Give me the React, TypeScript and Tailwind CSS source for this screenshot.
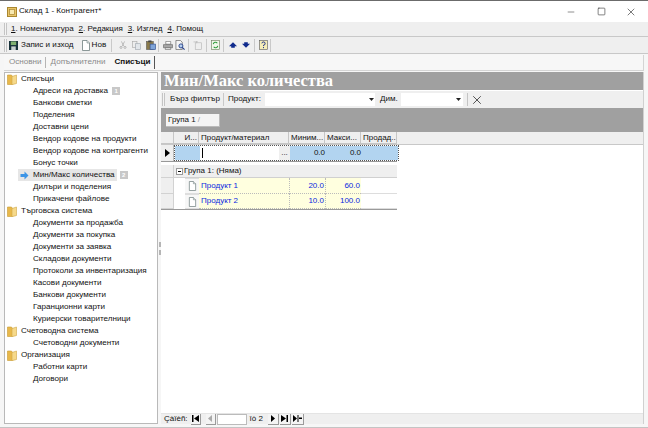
import { ReactNode } from "react";
import { Minus, Square, X } from "lucide-react";

const font = { fontFamily: '"Liberation Sans", Tahoma, sans-serif' };

const treeGroups = [
  {
    title: "Списъци",
    items: [
      "Адреси на доставка",
      "Банкови сметки",
      "Поделения",
      "Доставни цени",
      "Вендор кодове на продукти",
      "Вендор кодове на контрагенти",
      "Бонус точки",
      "Мин/Макс количества",
      "Дилъри и поделения",
      "Прикачени файлове",
    ],
  },
  {
    title: "Търговска система",
    items: [
      "Документи за продажба",
      "Документи за покупка",
      "Документи за заявка",
      "Складови документи",
      "Протоколи за инвентаризация",
      "Касови документи",
      "Банкови документи",
      "Гаранционни карти",
      "Куриерски товарителници",
    ],
  },
  { title: "Счетоводна система", items: ["Счетоводни документи"] },
  { title: "Организация", items: ["Работни карти", "Договори"] },
];

function Grip() {
  return <div className="w-[3px] h-full border-x border-[#c4c4c4] bg-[#f4f4f4] shrink-0" />;
}

function Sep() {
  return <div className="w-px h-[13px] bg-[#c9c9c9] shrink-0" />;
}

function Folder() {
  return (
    <svg width="10" height="11" viewBox="0 0 10 11" className="shrink-0">
      <path d="M0.500 1h4l1 1.500v8h-5z" fill="#e8b84a" stroke="#c79a33" strokeWidth="0.600" />
      <path d="M5 2.500l4.500-1.500v8.500l-4.500 1.200z" fill="#f6d98a" stroke="#d0a848" strokeWidth="0.600" />
    </svg>
  );
}

function DocIcon({ size = 10 }: { size?: number }) {
  return (
    <svg width={size} height={size + 1} viewBox="0 0 10 11" className="shrink-0">
      <path d="M1.500 0.500h4.500l2.500 2.500v7.500h-7z" fill="#fff" stroke="#6f7f7f" strokeWidth="0.800" />
      <path d="M6 0.500v2.500h2.500" fill="#e4e8e8" stroke="#6f7f7f" strokeWidth="0.600" />
    </svg>
  );
}

function TreeBadge({ n }: { n: number }) {
  return (
    <span className="w-[8px] h-[8px] bg-[#c8c8c8] text-white text-[6px] leading-[8px] text-center font-bold">{n}</span>
  );
}

function Tree() {
  return (
    <div className="w-[154px] shrink-0 bg-white border border-[#b9b9b9] overflow-hidden">
      {treeGroups.map((g) => (
        <div key={g.title}>
          <div className="h-[12px] flex items-center gap-[4px] pl-[2px] text-[8.100px] text-[#111]">
            <Folder />
            <span>{g.title}</span>
          </div>
          {g.items.map((item) => {
            const active = item === "Мин/Макс количества";
            return (
              <div key={item} className="h-[12px] flex items-center text-[8.100px] text-[#111] relative pl-[28px] whitespace-nowrap">
                {active && (
                  <div className="absolute left-[13px] top-0 w-[99px] h-[12px] bg-[#e6e6e6]" />
                )}
                {active && (
                  <svg width="9" height="9" viewBox="0 0 9 9" className="absolute left-[15px] top-[2px]">
                    <path d="M0.500 3h4V0.500L8.500 4.500 4.500 8.500V6h-4z" fill="#3d95e6" />
                  </svg>
                )}
                <span className="relative">{item}</span>
                {item === "Адреси на доставка" && <span className="ml-[4px] flex"><TreeBadge n={1} /></span>}
                {active && <span className="ml-[5px] relative flex"><TreeBadge n={2} /></span>}
              </div>
            );
          })}
        </div>
      ))}
    </div>
  );
}

function ToolIcons() {
  return (
    <>
      <svg width="8" height="10" viewBox="0 0 10 10" className="ml-[7px] shrink-0" aria-label="scissors">
        <path d="M3 0.500l3 6M7 0.500l-3 6" stroke="#a9a9a9" strokeWidth="0.900" fill="none" />
        <circle cx="2.500" cy="8" r="1.300" fill="none" stroke="#a9a9a9" />
        <circle cx="7.500" cy="8" r="1.300" fill="none" stroke="#a9a9a9" />
      </svg>
      <svg width="9" height="9" viewBox="0 0 10 10" className="ml-[5px] shrink-0" aria-label="copy">
        <rect x="0.500" y="0.500" width="5" height="6.500" fill="#ededed" stroke="#a8a8a8" strokeWidth="0.700" />
        <rect x="4" y="3" width="5.500" height="6.500" fill="#e2e6ea" stroke="#a0a8b0" strokeWidth="0.700" />
      </svg>
      <svg width="10" height="10" viewBox="0 0 11 11" className="ml-[5px] shrink-0" aria-label="paste">
        <rect x="0.500" y="1.500" width="7.500" height="9" fill="#8a7a4a" stroke="#555" strokeWidth="0.600" />
        <rect x="2.500" y="0.500" width="3.500" height="2" fill="#444" />
        <rect x="4.500" y="4.500" width="6" height="6" fill="#7fa4d8" stroke="#2f4f8f" strokeWidth="0.700" />
      </svg>
      <div className="ml-[2px]"><Sep /></div>
      <svg width="10" height="9" viewBox="0 0 11 10" className="ml-[4px] shrink-0" aria-label="print">
        <path d="M3 0.500h5.500v3H3z" fill="#fff" stroke="#555" strokeWidth="0.600" />
        <path d="M0.500 4h10v3.500h-10z" fill="#a8a8a8" stroke="#555" strokeWidth="0.600" />
        <path d="M2.500 7.500h6v2h-6z" fill="#eee" stroke="#555" strokeWidth="0.600" />
      </svg>
      <svg width="10" height="10" viewBox="0 0 11 11" className="ml-[2px] shrink-0" aria-label="preview">
        <path d="M1 0.500h5l2 2v8H1z" fill="#f4f4f4" stroke="#555" strokeWidth="0.700" />
        <circle cx="6.500" cy="6.500" r="2.200" fill="#b8d0ee" stroke="#24408a" />
        <path d="M8 8l2.500 2.500" stroke="#24408a" strokeWidth="1.200" />
      </svg>
      <div className="ml-[3px]"><Sep /></div>
      <svg width="9" height="9" viewBox="0 0 10 10" className="ml-[4px] shrink-0" aria-label="disabled">
        <rect x="2.500" y="2" width="7" height="7.500" fill="#eee" stroke="#b5b5b5" strokeWidth="0.700" />
        <path d="M0.500 1h5M4 2.500V0" stroke="#bbb" strokeWidth="0.800" />
      </svg>
      <div className="ml-[4px]"><Sep /></div>
      <svg width="9" height="10" viewBox="0 0 10 11" className="ml-[4px] shrink-0" aria-label="refresh">
        <rect x="0.500" y="0.500" width="9" height="10" fill="#f2f7ea" stroke="#6f7f60" strokeWidth="0.700" />
        <path d="M2.500 4.500a2.500 2.500 0 0 1 4.500-1M7.500 6.500a2.500 2.500 0 0 1-4.500 1" stroke="#2f9e3a" strokeWidth="1.200" fill="none" />
      </svg>
      <div className="ml-[3px]"><Sep /></div>
      <svg width="8" height="6" viewBox="0 0 9 6" className="ml-[5px] shrink-0" aria-label="up">
        <path d="M4.500 0L9 4.500H6.500V6h-4V4.500H0z" fill="#0f2a8c" />
      </svg>
      <svg width="8" height="6" viewBox="0 0 9 6" className="ml-[5px] shrink-0" aria-label="down">
        <path d="M4.500 6L9 1.500H6.500V0h-4v1.500H0z" fill="#0f2a8c" />
      </svg>
      <div className="ml-[4px]"><Sep /></div>
      <svg width="9" height="10" viewBox="0 0 10 11" className="ml-[4px] shrink-0" aria-label="help">
        <rect x="0.500" y="0.500" width="9" height="10" fill="#f6eeb8" stroke="#5f5f5f" strokeWidth="0.700" />
        <path d="M3.200 3.700a1.800 1.800 0 1 1 1.800 2v1M5 7.800v1.200" stroke="#1b2f8a" strokeWidth="1.100" fill="none" />
      </svg>
    </>
  );
}

function HeaderCell({ w, children }: { w: string; children?: ReactNode }) {
  return (
    <div className={`${w} h-full shrink-0 border-r border-b border-[#c6c6c6] bg-[#efefef] flex items-center pl-[2px] text-[8px] text-[#111] whitespace-nowrap overflow-hidden`}>
      {children}
    </div>
  );
}

function DataRow({ name, min, max, last }: { name: string; min: string; max: string; last?: boolean }) {
  return (
    <div className={`h-[16px] shrink-0 flex w-[236px] ${last ? "border-b border-[#9a9a9a]" : ""}`}>
      <div className="w-[13px] shrink-0 bg-[#efefef] border-r border-b border-[#d2d2d2]" />
      <div className="w-[11px] shrink-0" />
      <div className="w-[14px] shrink-0 bg-[#f7f7f7] border-y border-[#dedede] flex items-center justify-center">
        <DocIcon size={9} />
      </div>
      <div className="w-[90px] shrink-0 bg-[#ffffdf] border-b border-dotted border-[#bbb] flex items-center pl-[2px] text-[8px] text-[#0a28e0]">{name}</div>
      <div className="w-[36px] shrink-0 bg-[#ffffdf] border-b border-l border-dotted border-[#bbb] flex items-center justify-end pr-[1px] text-[8px] text-[#0a28e0]">{min}</div>
      <div className="w-[36px] shrink-0 bg-[#ffffdf] border-b border-l border-dotted border-[#bbb] flex items-center justify-end pr-[1px] text-[8px] text-[#0a28e0]">{max}</div>
      <div className="w-[36px] shrink-0 bg-white border-b border-[#ddd]" />
    </div>
  );
}

function NavBtn({ w, children, disabled }: { w: string; children: ReactNode; disabled?: boolean }) {
  return (
    <div className={`${w} h-[11px] shrink-0 flex items-center justify-center bg-[#f4f4f4] border-r border-b border-[#9a9a9a] ${disabled ? "text-[#aaa]" : "text-black"}`}>
      {children}
    </div>
  );
}

export default function App() {
  return (
    <div style={font} className="w-[648px] h-[428px] bg-white flex flex-col overflow-hidden border-t border-[#6b6b6b] relative">
      {/* title bar */}
      <div className="h-[21px] shrink-0 flex items-center pl-[7px] bg-white">
        <svg width="10" height="10" viewBox="0 0 10 10" className="shrink-0">
          <rect x="0.500" y="0.500" width="9" height="9" fill="#e9c468" stroke="#a98730" />
          <rect x="2.500" y="2.500" width="5" height="5" fill="#f7e8b0" stroke="#a98730" strokeWidth="0.700" />
        </svg>
        <span className="ml-[2px] text-[8.100px] text-[#111]">Склад 1 - Контрагент*</span>
        <div className="ml-auto flex items-center text-[#333] pr-[2px]">
          <div className="w-[30px] flex justify-center"><Minus size={10} strokeWidth={1.300} /></div>
          <div className="w-[30px] flex justify-center"><Square size={9} strokeWidth={1.600} /></div>
          <div className="w-[30px] flex justify-center"><X size={12} strokeWidth={1.300} /></div>
        </div>
      </div>

      <div className="flex-1 min-h-0 flex flex-col bg-[#f6f6f6] pl-[4px] pr-[4px] pb-[3px] border-b border-[#c4c4c4]">
        {/* menu */}
        <div className="h-[15px] shrink-0 bg-[#efefef] border-b border-[#c8c8c8] flex items-center -mx-[4px] pl-[4px]">
          <div className="h-[12px]"><Grip /></div>
          <div className="flex items-center gap-[5px] pl-[4px] text-[8px] text-[#111]">
            <span><u>1</u>. Номенклатура</span>
            <span><u>2</u>. Редакция</span>
            <span><u>3</u>. Изглед</span>
            <span><u>4</u>. Помощ</span>
          </div>
        </div>

        {/* toolbar */}
        <div className="h-[17px] shrink-0 bg-[#efefef] border-b border-[#c8c8c8] flex items-center -mx-[4px] pl-[4px]">
          <div className="h-[13px]"><Grip /></div>
          <svg width="9" height="9" viewBox="0 0 10 10" className="ml-[2px] mr-[1px] shrink-0">
            <rect width="10" height="10" fill="#17313a" />
            <rect x="2" y="0.500" width="6" height="4" fill="#7fb070" />
            <rect x="2.500" y="6" width="5" height="4" fill="#c8d0d0" />
          </svg>
          <span className="ml-[2px] text-[8.100px] text-[#111] whitespace-nowrap">Запис и изход</span>
          <div className="ml-[7px]"><DocIcon /></div>
          <span className="ml-[1px] text-[8.100px] text-[#111]">Нов</span>
          <div className="ml-[5px]"><Sep /></div>
          <ToolIcons />
          <div className="ml-[2px]"><Sep /></div>
        </div>

        {/* tabs */}
        <div className="h-[16px] shrink-0 mt-[1px] bg-[#f7f7f7] border-r border-b border-[#d4d4d4] flex items-center pl-[5px] text-[8.100px]">
          <span className="text-[#8a8a8a]">Основни</span>
          <div className="w-px h-[11px] bg-[#b5b5b5] ml-[3px] mr-[5px]" />
          <span className="text-[#8a8a8a]">Допълнителни</span>
          <span className="font-bold text-[#111] ml-[9px]">Списъци</span>
          <div className="w-px h-[13px] bg-[#555] ml-[4px]" />
        </div>

        {/* body */}
        <div className="flex-1 min-h-0 flex pt-[1px]">
          <Tree />
          <div className="w-[3px] shrink-0 flex flex-col items-center justify-center gap-[3px]">
            <div className="w-[2px] h-[5px] bg-[#b5b5b5]" />
            <div className="w-[2px] h-[5px] bg-[#b5b5b5]" />
          </div>
          <div className="flex-1 min-w-0 flex flex-col bg-white border-r border-[#d0d0d0]">
            <div className="h-[18px] shrink-0 bg-[#a0a0a0] flex items-center pl-[3px] text-white font-bold text-[16.500px] whitespace-nowrap" style={{ fontFamily: '"Liberation Serif", serif' }}>
              Мин/Макс количества
            </div>
            <div className="h-[17px] shrink-0 mt-[1px] bg-[#efefef] flex items-center pl-[1px] text-[8.100px] text-[#111]">
              <div className="h-[13px]"><Grip /></div>
              <span className="ml-[5px] whitespace-nowrap">Бърз филтър</span>
              <div className="ml-[3px]"><Sep /></div>
              <span className="ml-[4px]">Продукт:</span>
              <div className="ml-[4px] w-[110px] h-[13px] bg-white flex items-center justify-end pr-[1px]">
                <svg width="5" height="3" viewBox="0 0 5 3"><path d="M0 0h5L2.500 3z" fill="#222" /></svg>
              </div>
              <span className="ml-[5px]">Дим.</span>
              <div className="ml-[3px] w-[62px] h-[13px] bg-white flex items-center justify-end pr-[2px]">
                <svg width="5" height="3" viewBox="0 0 5 3"><path d="M0 0h5L2.500 3z" fill="#222" /></svg>
              </div>
              <div className="ml-[4px] h-[13px] w-px bg-[#c4c4c4]" />
              <X size={14} strokeWidth={1.300} className="ml-[2px] text-[#222]" />
            </div>
            <div className="h-[24px] shrink-0 bg-[#a0a0a0] flex items-center pl-[5px]">
              <div className="w-[54px] h-[13px] bg-[#f4f4f4] border-r border-b border-[#bbb] flex items-center pl-[2px] text-[8px] text-[#111]">
                Група 1 <span className="ml-[2px] text-[#999]">/</span>
              </div>
            </div>

            {/* grid */}
            <div className="h-[13px] shrink-0 flex bg-[#efefef] border-b border-[#c8c8c8]">
              <HeaderCell w="w-[13px]" />
              <HeaderCell w="w-[25px]"><span className="ml-auto pr-[1px]">И...</span></HeaderCell>
              <HeaderCell w="w-[90px]">Продукт/материал</HeaderCell>
              <HeaderCell w="w-[36px]">Миним...</HeaderCell>
              <HeaderCell w="w-[36px]">Макси...</HeaderCell>
              <HeaderCell w="w-[36px]">Продад...</HeaderCell>
            </div>
            <div className="h-[16px] shrink-0 flex">
              <div className="w-[13px] shrink-0 bg-[#efefef] border-r border-[#bbb] flex items-center justify-center">
                <svg width="5" height="8" viewBox="0 0 5 8"><path d="M0 0l5 4-5 4z" fill="#000" /></svg>
              </div>
              <div className="flex border border-dotted border-[#555]">
                <div className="w-[25px] shrink-0 bg-[#b2d4f0]" />
                <div className="w-[90px] shrink-0 bg-white flex items-center pl-[2px]">
                  <div className="w-px h-[10px] bg-black" />
                  <div className="ml-auto w-[11px] h-full bg-[#efefef] text-[8px] leading-[14px] text-center text-[#222]">...</div>
                </div>
                <div className="w-[36px] shrink-0 bg-[#b2d4f0] text-[8px] text-[#111] text-right pr-[1px] leading-[14px]">0.0</div>
                <div className="w-[36px] shrink-0 bg-[#b2d4f0] text-[8px] text-[#111] text-right pr-[1px] leading-[14px]">0.0</div>
                <div className="w-[36px] shrink-0 bg-[#b2d4f0]" />
              </div>
            </div>
            <div className="h-[4px] shrink-0 w-[236px] border-t border-[#999] bg-white" />
            <div className="h-[13px] shrink-0 flex w-[236px]">
              <div className="w-[13px] shrink-0 bg-[#efefef] border-r border-b border-[#d2d2d2]" />
              <div className="flex-1 bg-[#efefef] border-b border-[#d0d0d0] flex items-center pl-[2px] text-[8px] text-[#111]">
                <div className="w-[7px] h-[7px] bg-white border border-[#999] flex items-center justify-center mr-[1px]">
                  <div className="w-[3px] h-px bg-black" />
                </div>
                Група 1: (Няма)
              </div>
            </div>
            <DataRow name="Продукт 1" min="20.0" max="60.0" />
            <DataRow name="Продукт 2" min="10.0" max="100.0" last />

            <div className="flex-1" />

            {/* navigator */}
            <div className="h-[11px] shrink-0 bg-[#efefef] border-t border-[#e4e4e4] flex items-center pl-[3px] text-[8px] text-[#111]">
              <span>Çàïèñ:</span>
              <div className="ml-[3px] flex gap-[5px]">
                <NavBtn w="w-[10px]"><svg width="7" height="7" viewBox="0 0 7 7"><path d="M0 0h1.500v7H0zM7 0v7L2 3.500z" fill="currentColor" /></svg></NavBtn>
                <NavBtn w="w-[10px]" disabled><svg width="4" height="7" viewBox="0 0 4 7"><path d="M4 0v7L0 3.500z" fill="currentColor" /></svg></NavBtn>
              </div>
              <div className="ml-[1px] w-[30px] h-[11px] bg-white border border-[#bbb]" />
              <span className="ml-[3px]">îò 2</span>
              <div className="ml-[5px] flex gap-px">
                <NavBtn w="w-[11px]"><svg width="4" height="7" viewBox="0 0 4 7"><path d="M0 0v7l4-3.500z" fill="currentColor" /></svg></NavBtn>
                <NavBtn w="w-[11px]"><svg width="7" height="7" viewBox="0 0 7 7"><path d="M0 0v7l5-3.500zM5.500 0H7v7H5.500z" fill="currentColor" /></svg></NavBtn>
                <NavBtn w="w-[12px]"><svg width="9" height="7" viewBox="0 0 9 7"><path d="M0 0v7l4-3.500zM4.500 0H5.500v7H4.500zM6 2.500h3v1.500H6z" fill="currentColor" /></svg></NavBtn>
              </div>
            </div>
          </div>
        </div>
      </div>
    </div>
  );
}
